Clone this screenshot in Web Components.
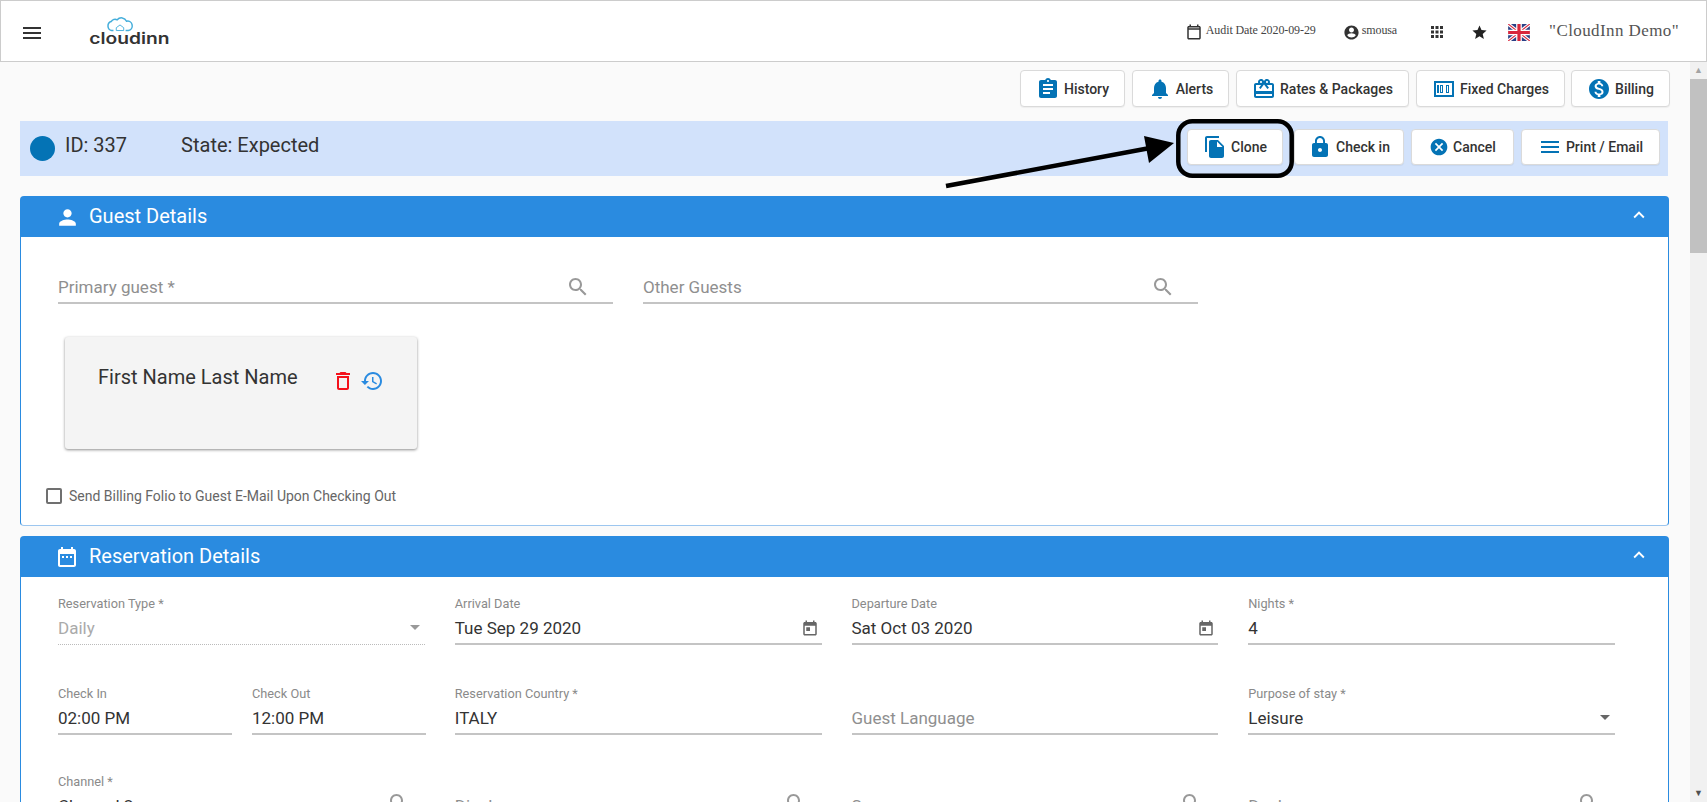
<!DOCTYPE html>
<html>
<head>
<meta charset="utf-8">
<title>CloudInn</title>
<style>
  html, body { margin: 0; height: 100%; overflow: hidden; }
  body { font-family: Roboto, "Liberation Sans", sans-serif; background: #fafafa; color: #333; }
</style>
</head>
<body>
<ci-app></ci-app>

<script>
// material icon paths, 24x24 box
const ICONS = {
  menu: 'M3 18h18v-2H3v2zm0-5h18v-2H3v2zm0-7v2h18V6H3z',
  event: 'M19 4h-1V2h-2v2H8V2H6v2H5c-1.1 0-2 .9-2 2v14c0 1.1.9 2 2 2h14c1.1 0 2-.9 2-2V6c0-1.1-.9-2-2-2zm0 16H5V9h14v11zM5 7V6h14v1H5z',
  account: 'M12 2C6.48 2 2 6.48 2 12s4.48 10 10 10 10-4.48 10-10S17.52 2 12 2zm0 3c1.93 0 3.5 1.57 3.5 3.5S13.93 12 12 12s-3.5-1.57-3.5-3.5S10.07 5 12 5zm0 14.2c-2.5 0-4.71-1.28-6-3.22.03-1.99 4-3.08 6-3.08s5.97 1.09 6 3.08c-1.29 1.94-3.5 3.22-6 3.22z',
  apps: 'M4 8h4V4H4v4zm6 12h4v-4h-4v4zm-6 0h4v-4H4v4zm0-6h4v-4H4v4zm6 0h4v-4h-4v4zm6-10v4h4V4h-4zm-6 4h4V4h-4v4zm6 6h4v-4h-4v4zm0 6h4v-4h-4v4z',
  star: 'M12 17.27L18.18 21l-1.64-7.03L22 9.24l-7.19-.61L12 2 9.19 8.63 2 9.24l5.46 4.73L5.82 21z',
  assignment: 'M19 3h-4.18C14.4 1.84 13.3 1 12 1c-1.3 0-2.4.84-2.82 2H5c-1.1 0-2 .9-2 2v14c0 1.1.9 2 2 2h14c1.1 0 2-.9 2-2V5c0-1.1-.9-2-2-2zm-7 0c.55 0 1 .45 1 1s-.45 1-1 1-1-.45-1-1 .45-1 1-1zm2 14H7v-2h7v2zm3-4H7v-2h10v2zm0-4H7V7h10v2z',
  bell: 'M12 22c1.1 0 2-.9 2-2h-4c0 1.1.9 2 2 2zm6-6v-5c0-3.07-1.63-5.64-4.5-6.32V4c0-.83-.67-1.5-1.5-1.5s-1.5.67-1.5 1.5v.68C7.64 5.36 6 7.92 6 11v5l-2 2v1h16v-1l-2-2z',
  gift: 'M20 6h-2.18c.11-.31.18-.65.18-1 0-1.66-1.34-3-3-3-1.05 0-1.96.54-2.5 1.35l-.5.67-.5-.68C10.96 2.54 10.05 2 9 2 7.34 2 6 3.34 6 5c0 .35.07.69.18 1H4c-1.11 0-1.99.89-1.99 2L2 19c0 1.11.89 2 2 2h16c1.11 0 2-.89 2-2V8c0-1.11-.89-2-2-2zm-5-2c.55 0 1 .45 1 1s-.45 1-1 1-1-.45-1-1 .45-1 1-1zM9 4c.55 0 1 .45 1 1s-.45 1-1 1-1-.45-1-1 .45-1 1-1zm11 15H4v-2h16v2zm0-5H4V8h5.08L7 10.83 8.62 12 11 8.76l1-1.36 1 1.36L15.38 12 17 10.83 14.92 8H20v6z',
  money: 'M14 16h3V8h-3v8zm1-7h1v6h-1V9zM8 16h3V8H8v8zm1-7h1v6H9V9zM5 8h2v8H5zM2 4v16h20V4H2zm18 14H4V6h16v12z',
  dollar: 'M12 2C6.48 2 2 6.48 2 12s4.48 10 10 10 10-4.48 10-10S17.52 2 12 2zm1.41 16.09V20h-2.67v-1.93c-1.71-.36-3.16-1.46-3.27-3.4h1.96c.1 1.05.82 1.87 2.65 1.87 1.96 0 2.4-.98 2.4-1.59 0-.83-.44-1.61-2.67-2.14-2.48-.6-4.18-1.62-4.18-3.67 0-1.72 1.39-2.84 3.11-3.21V4h2.67v1.95c1.86.45 2.79 1.86 2.85 3.39H14.3c-.05-1.11-.64-1.87-2.22-1.87-1.5 0-2.4.68-2.4 1.64 0 .84.65 1.39 2.67 1.91s4.18 1.39 4.18 3.91c-.01 1.83-1.38 2.83-3.12 3.16z',
  copy: 'M16 1H4c-1.1 0-2 .9-2 2v14h2V3h12V1zm-1 4l6 6v10c0 1.1-.9 2-2 2H7.99C6.89 23 6 22.1 6 21l.01-14c0-1.1.89-2 1.99-2h7zm-1 7h5.5L14 6.5V12z',
  lock: 'M18 8h-1V6c0-2.76-2.24-5-5-5S7 3.24 7 6v2H6c-1.1 0-2 .9-2 2v10c0 1.1.9 2 2 2h12c1.1 0 2-.9 2-2V10c0-1.1-.9-2-2-2zm-6 9c-1.1 0-2-.9-2-2s.9-2 2-2 2 .9 2 2-.9 2-2 2zm3.1-9H8.9V6c0-1.71 1.39-3.1 3.1-3.1 1.71 0 3.1 1.39 3.1 3.1v2z',
  cancel: 'M12 2C6.47 2 2 6.47 2 12s4.47 10 10 10 10-4.47 10-10S17.53 2 12 2zm5 13.59L15.59 17 12 13.41 8.41 17 7 15.59 10.59 12 7 8.41 8.41 7 12 10.59 15.59 7 17 8.41 13.41 12 17 15.59z',
  lines: 'M3 18h18v-2H3v2zm0-5h18v-2H3v2zm0-7v2h18V6H3z',
  person: 'M12 12c2.21 0 4-1.79 4-4s-1.79-4-4-4-4 1.79-4 4 1.79 4 4 4zm0 2c-2.67 0-8 1.34-8 4v2h16v-2c0-2.66-5.33-4-8-4z',
  up: 'M7.41 15.41L12 10.83l4.59 4.58L18 14l-6-6-6 6z',
  search: 'M15.5 14h-.79l-.28-.27C15.41 12.59 16 11.11 16 9.5 16 5.91 13.09 3 9.5 3S3 5.91 3 9.5 5.91 16 9.5 16c1.61 0 3.09-.59 4.23-1.57l.27.28v.79l5 4.99L20.49 19l-4.99-5zm-6 0C7.01 14 5 11.99 5 9.5S7.01 5 9.5 5 14 7.01 14 9.5 11.99 14 9.5 14z',
  trash: 'M6 19c0 1.1.9 2 2 2h8c1.1 0 2-.9 2-2V7H6v12zM8 9h8v10H8V9zm7.5-5l-1-1h-5l-1 1H5v2h14V4z',
  history: 'M13 3c-4.97 0-9 4.03-9 9H1l3.89 3.89.07.14L9 12H6c0-3.87 3.13-7 7-7s7 3.13 7 7-3.13 7-7 7c-1.93 0-3.68-.79-4.94-2.06l-1.42 1.42C8.27 19.99 10.51 21 13 21c4.97 0 9-4.03 9-9s-4.03-9-9-9zm-1 5v5l4.28 2.54.72-1.21-3.5-2.08V8H12z',
  today: 'M19 4h-1V2h-2v2H8V2H6v2H5c-1.11 0-1.99.9-1.99 2L3 20c0 1.1.89 2 2 2h14c1.1 0 2-.9 2-2V6c0-1.1-.9-2-2-2zm0 16H5V9h14v11zM7 11h5v5H7z',
  eventFilled: 'M19 4h-1V2h-2v2H8V2H6v2H5c-1.11 0-1.99.9-1.99 2L3 20c0 1.1.89 2 2 2h14c1.1 0 2-.9 2-2V6c0-1.1-.9-2-2-2zm0 16H5V9h14v11zM7 11h2v2H7zm4 0h2v2h-2zm4 0h2v2h-2z'
};

class CiIcon extends HTMLElement {
  constructor() {
    super();
    const size = this.getAttribute('size') || 24;
    const color = this.getAttribute('color') || 'currentColor';
    this.attachShadow({ mode: 'open' });
    this.shadowRoot.innerHTML = `
      <style>
        :host { display: inline-flex; flex: none; }
        svg { display: block; }
      </style>
      <svg width="${size}" height="${size}" viewBox="0 0 24 24" fill="${color}"><path d="${ICONS[this.getAttribute('name')]}"/></svg>`;
  }
}
customElements.define('ci-icon', CiIcon);

class CiLogo extends HTMLElement {
  constructor() {
    super();
    this.attachShadow({ mode: 'open' });
    this.shadowRoot.innerHTML = `
      <style>
        :host { display: flex; flex-direction: column; align-items: center; width: 82px; margin-top: -2px; }
        svg { display: block; margin-right: 18px; }
        span { display: block; font: 600 15.5px/13px Inter, sans-serif; color: #333; transform: scaleX(1.24); }
      </style>
      <svg width="28" height="16" viewBox="0 0 30 16" fill="none" stroke="#45aedb" stroke-width="1.6">
        <path d="M8 15H6a5 5 0 0 1-.5-9.6A5 5 0 0 1 12 3.5 6 6 0 0 1 22 5a5 5 0 0 1 2 10h-3"/>
        <path d="M11 15v-3l4-3 4 3v3z" stroke-width="1"/>
      </svg>
      <span>cloudinn</span>`;
  }
}
customElements.define('ci-logo', CiLogo);

class CiHeader extends HTMLElement {
  constructor() {
    super();
    this.attachShadow({ mode: 'open' });
    this.shadowRoot.innerHTML = `
      <style>
        :host { display: flex; align-items: center; flex: none; box-sizing: border-box; height: 62px; background: #fff; border: 1px solid #ccc; padding: 0 27px 0 19px; font-family: "Liberation Serif", serif; color: #444; }
        .burger { margin-top: 3px; }
        ci-logo { margin-left: 44px; }
        .right { margin-left: auto; display: flex; align-items: center; padding-top: 2px; }
        .item { display: flex; align-items: center; font-size: 12px; gap: 3px; letter-spacing: -.1px; }
        .item span { position: relative; top: -2px; }
        .demo { font-size: 17px; color: #555; margin-left: 19px; letter-spacing: .4px; position: relative; top: -1px; }
        svg.flag { display: block; margin-left: 20px; }
      </style>
      <ci-icon class="burger" name="menu" size="24" color="#333"></ci-icon>
      <ci-logo></ci-logo>
      <div class="right">
        <div class="item"><ci-icon name="event" size="18" color="#333"></ci-icon><span>Audit Date 2020-09-29</span></div>
        <div class="item" style="margin-left:27px;gap:2px"><ci-icon name="account" size="17" color="#333"></ci-icon><span>smousa</span></div>
        <ci-icon name="apps" size="18" color="#333" style="margin-left:31px"></ci-icon>
        <ci-icon name="star" size="17" color="#222" style="margin-left:25px"></ci-icon>
        <svg class="flag" width="22" height="17" viewBox="0 0 23 18">
          <rect width="23" height="18" fill="#2a3f85"/>
          <path d="M0 0L23 18M23 0L0 18" stroke="#fff" stroke-width="3.6"/>
          <path d="M0 0L23 18M23 0L0 18" stroke="#d8263c" stroke-width="1.2"/>
          <path d="M11.5 0V18M0 9H23" stroke="#fff" stroke-width="6"/>
          <path d="M11.5 0V18M0 9H23" stroke="#d8263c" stroke-width="3.4"/>
        </svg>
        <span class="demo">"CloudInn Demo"</span>
      </div>`;
  }
}
customElements.define('ci-header', CiHeader);

class CiButton extends HTMLElement {
  constructor() {
    super();
    const icon = this.getAttribute('icon');
    const size = this.getAttribute('size') || 24;
    this.attachShadow({ mode: 'open' });
    this.shadowRoot.innerHTML = `
      <style>
        :host { display: inline-flex; align-items: center; justify-content: center; gap: 4px; box-sizing: border-box; height: 37px; background: #fff; border: 1px solid #dadada; border-radius: 4px; font-size: 14px; font-weight: 500; color: #333; box-shadow: 0 1px 1px rgba(0,0,0,.05); }
      </style>
      <ci-icon name="${icon}" size="${size}" color="#0473b5"></ci-icon>
      <slot></slot>`;
  }
}
customElements.define('ci-button', CiButton);

class CiStatus extends HTMLElement {
  constructor() {
    super();
    this.attachShadow({ mode: 'open' });
    this.shadowRoot.innerHTML = `
      <style>
        :host { display: flex; align-items: flex-start; box-sizing: border-box; height: 55px; background: #d2e2fb; padding: 8px 8px 0 10px; font-size: 20px; color: #333; }
        .dot { width: 25px; height: 25px; border-radius: 50%; background: #0473b5; margin: 7px 10px 0 0; flex: none; }
        .txt { line-height: 24px; margin-top: 4px; }
        .state { margin-left: 54px; }
        .btns { margin-left: auto; display: flex; gap: 7px; }
      </style>
      <span class="dot"></span>
      <span class="txt">ID: 337</span>
      <span class="txt state">State: Expected</span>
      <div class="btns"><slot></slot></div>`;
  }
}
customElements.define('ci-status', CiStatus);

class CiSection extends HTMLElement {
  constructor() {
    super();
    const icon = this.getAttribute('icon');
    const size = Number(this.getAttribute('icon-size') || 24);
    this.attachShadow({ mode: 'open' });
    this.shadowRoot.innerHTML = `
      <style>
        :host { display: block; border: 1px solid #2a8be0; border-bottom-color: #9cc6ef; border-radius: 4px; background: #fff; }
        .head { display: flex; align-items: center; height: 40px; background: #2a8be0; color: #fff; padding: 0 18px 0 34px; font-size: 20px; }
        .title { margin: -2px 0 0 ${34 - size}px; }
        .up { margin: -4px 0 0 auto; }
      </style>
      <div class="head">
        <ci-icon name="${icon}" size="${size}" color="#fff"></ci-icon>
        <span class="title">${this.getAttribute('title')}</span>
        <ci-icon class="up" name="up" size="22" color="#fff"></ci-icon>
      </div>
      <slot></slot>`;
  }
}
customElements.define('ci-section', CiSection);

class CiField extends HTMLElement {
  constructor() {
    super();
    const label = this.getAttribute('label');
    const value = this.getAttribute('value');
    const icon = this.getAttribute('icon');
    const arrow = this.hasAttribute('arrow');
    const off = this.hasAttribute('disabled');
    const isSearch = icon === 'search';
    const iconTop = this.getAttribute('icon-top') || (isSearch ? 19 : 22);
    const iconRight = this.getAttribute('icon-right') || (isSearch ? 23 : 3);
    this.attachShadow({ mode: 'open' });
    this.shadowRoot.innerHTML = `
      <style>
        :host { display: block; position: relative; box-sizing: border-box; height: 48px; border-bottom: ${off ? '1.5px dotted #bbb' : '2px solid #c4c4c4'}; }
        .label { position: absolute; left: 0; top: 0; font-size: 12.75px; line-height: 14px; color: #8a8a8a; white-space: nowrap; }
        .label.big { top: 21px; font-size: 17px; line-height: 20px; color: #8f8f8f; }
        .value { position: absolute; left: 0; top: 21px; font-size: 17px; line-height: 20px; color: ${off ? '#aaa' : '#333'}; white-space: nowrap; }
        .end { position: absolute; right: ${iconRight}px; top: ${iconTop}px; display: flex; }
        .arrow { position: absolute; right: 5px; top: 28px; width: 0; height: 0; border: 5px solid transparent; border-top-color: ${off ? '#999' : '#666'}; border-bottom: 0; }
      </style>
      <span class="label ${value ? '' : 'big'}">${label}</span>
      ${value ? `<span class="value">${value}</span>` : ''}
      ${icon ? `<span class="end"><ci-icon name="${icon}" size="${isSearch ? 24 : 18}" color="${isSearch ? '#999' : '#666'}"></ci-icon></span>` : ''}
      ${arrow ? '<span class="arrow"></span>' : ''}`;
  }
}
customElements.define('ci-field', CiField);

class CiGuestCard extends HTMLElement {
  constructor() {
    super();
    this.attachShadow({ mode: 'open' });
    this.shadowRoot.innerHTML = `
      <style>
        :host { display: flex; align-items: flex-start; box-sizing: border-box; width: 352px; height: 112px; background: #f4f4f4; border-radius: 3px; box-shadow: 0 1px 3px rgba(0,0,0,.45); padding: 26px 0 0 33px; font-size: 20px; color: #333; }
        .name { line-height: 28px; width: 233px; }
        .icons { display: flex; gap: 5px; margin-top: 6px; }
      </style>
      <span class="name">${this.getAttribute('name')}</span>
      <div class="icons">
        <ci-icon name="trash" size="24" color="#f4111b"></ci-icon>
        <ci-icon name="history" size="24" color="#2a8be0"></ci-icon>
      </div>`;
  }
}
customElements.define('ci-guest-card', CiGuestCard);

class CiCheckbox extends HTMLElement {
  constructor() {
    super();
    this.attachShadow({ mode: 'open' });
    this.shadowRoot.innerHTML = `
      <style>
        :host { display: flex; align-items: center; gap: 7px; font-size: 14px; color: #666; }
        i { display: block; box-sizing: border-box; width: 16px; height: 16px; border: 2px solid #707070; border-radius: 2px; flex: none; }
      </style>
      <i></i><slot></slot>`;
  }
}
customElements.define('ci-checkbox', CiCheckbox);

class CiArrow extends HTMLElement {
  // the callout over the Clone button
  constructor() {
    super();
    this.attachShadow({ mode: 'open' });
    this.shadowRoot.innerHTML = `
      <style>
        :host { position: absolute; left: 0; top: 0; pointer-events: none; }
        svg { display: block; }
      </style>
      <svg width="1707" height="802" viewBox="0 0 1707 802">
        <rect x="1178.3" y="121.2" width="113.4" height="54.6" rx="14" fill="none" stroke="#000" stroke-width="4.5"/>
        <path d="M946 186L1150 148" stroke="#000" stroke-width="4.5"/>
        <path d="M1144 136L1174 143L1149 163Z" fill="#000"/>
      </svg>`;
  }
}
customElements.define('ci-arrow', CiArrow);

class CiApp extends HTMLElement {
  constructor() {
    super();
    this.attachShadow({ mode: 'open' });
    this.shadowRoot.innerHTML = `
      <style>
        :host { display: flex; flex-direction: column; height: 100vh; overflow: hidden; position: relative; }
        .main { flex: 1; display: flex; min-height: 0; }
        .page { flex: 1; min-width: 0; overflow: hidden; padding: 8px 21px 0 20px; }
        .scroll { width: 17px; flex: none; background: #f1f1f1; display: flex; flex-direction: column; align-items: center; }
        .scroll .a { height: 17px; font-size: 9px; line-height: 17px; color: #a3a3a3; }
        .scroll .thumb { width: 17px; height: 174px; background: #c1c1c1; }
        .scroll .down { margin-top: auto; color: #505050; }
        .top { display: flex; justify-content: flex-end; gap: 7px; margin-right: -1px; }
        ci-status { margin: 14px 1px 0 0; }
        ci-section { margin-top: 20px; }
        ci-section + ci-section { margin-top: 10px; }
        .guest { height: 288px; padding: 0 37px; }
        .guest-row { display: grid; grid-template-columns: 555px 555px; gap: 30px; padding-top: 19px; }
        ci-guest-card { margin: 33px 0 0 7px; }
        ci-checkbox { margin: 39px 0 0 -12px; }
        .res { padding: 20px 37px 0; }
        .res-row { display: grid; grid-template-columns: repeat(4, 366.75px); gap: 30px; margin-bottom: 42px; }
        .res-row + .res-row { margin-bottom: 40px; }
        .pair { display: grid; grid-template-columns: 174px 174px; gap: 20px; }
      </style>
      <ci-header></ci-header>
      <div class="main">
        <div class="page">
          <div class="top">
            <ci-button icon="assignment" style="width:105px">History</ci-button>
            <ci-button icon="bell" style="width:97px">Alerts</ci-button>
            <ci-button icon="gift" style="width:173px">Rates &amp; Packages</ci-button>
            <ci-button icon="money" style="width:149px">Fixed Charges</ci-button>
            <ci-button icon="dollar" style="width:99px;margin-left:-1px">Billing</ci-button>
          </div>
          <ci-status>
            <ci-button icon="copy" style="width:96px;height:36px;margin-right:4px">Clone</ci-button>
            <ci-button icon="lock" style="width:110px;height:36px">Check in</ci-button>
            <ci-button icon="cancel" size="20" style="width:103px;height:36px">Cancel</ci-button>
            <ci-button icon="lines" style="width:139px;height:36px">Print / Email</ci-button>
          </ci-status>
          <ci-section icon="person" icon-size="25" title="Guest Details">
            <div class="guest">
              <div class="guest-row">
                <ci-field label="Primary guest *" icon="search"></ci-field>
                <ci-field label="Other Guests" icon="search"></ci-field>
              </div>
              <ci-guest-card name="First Name Last Name"></ci-guest-card>
              <ci-checkbox>Send Billing Folio to Guest E-Mail Upon Checking Out</ci-checkbox>
            </div>
          </ci-section>
          <ci-section icon="eventFilled" title="Reservation Details">
            <div class="res">
              <div class="res-row">
                <ci-field label="Reservation Type *" value="Daily" arrow disabled></ci-field>
                <ci-field label="Arrival Date" value="Tue Sep 29 2020" icon="today"></ci-field>
                <ci-field label="Departure Date" value="Sat Oct 03 2020" icon="today"></ci-field>
                <ci-field label="Nights *" value="4"></ci-field>
              </div>
              <div class="res-row">
                <div class="pair">
                  <ci-field label="Check In" value="02:00 PM"></ci-field>
                  <ci-field label="Check Out" value="12:00 PM"></ci-field>
                </div>
                <ci-field label="Reservation Country *" value="ITALY"></ci-field>
                <ci-field label="Guest Language"></ci-field>
                <ci-field label="Purpose of stay *" value="Leisure" arrow></ci-field>
              </div>
              <div class="res-row">
                <ci-field label="Channel *" value="Channel 2" icon="search" icon-top="16" icon-right="14"></ci-field>
                <ci-field label="Display" icon="search" icon-top="16" icon-right="14"></ci-field>
                <ci-field label="Source" icon="search" icon-top="16" icon-right="14"></ci-field>
                <ci-field label="Deal" icon="search" icon-top="16" icon-right="14"></ci-field>
              </div>
            </div>
          </ci-section>
        </div>
        <div class="scroll">
          <span class="a">▲</span>
          <span class="thumb"></span>
          <span class="a down">▼</span>
        </div>
      </div>
      <ci-arrow></ci-arrow>`;
  }
}
customElements.define('ci-app', CiApp);
</script>
</body>
</html>
